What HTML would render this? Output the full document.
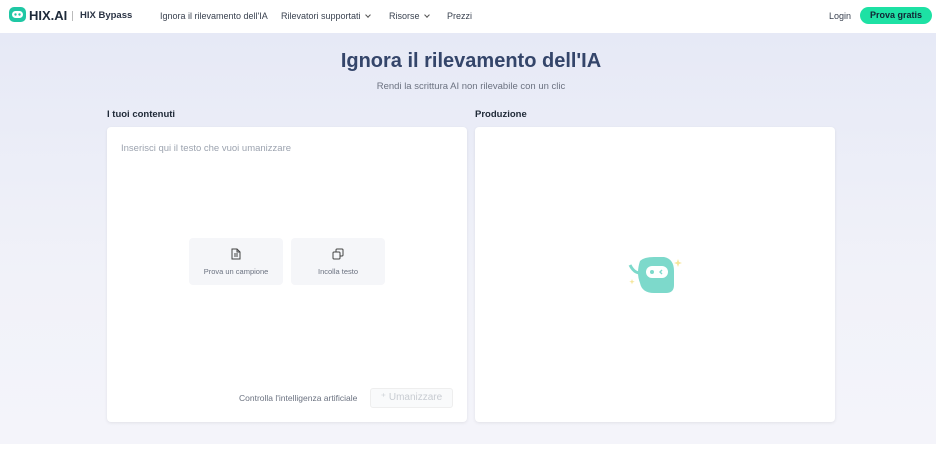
<!DOCTYPE html><html><head><style>
*{margin:0;padding:0;box-sizing:border-box}
body{width:942px;height:459px;background:#fff;font-family:"Liberation Sans",sans-serif;position:relative;overflow:hidden}
.hdr{position:absolute;left:0;top:0;width:942px;height:33px;background:#fff}
.main{position:absolute;left:0;top:33px;width:936px;height:411px;background:linear-gradient(#e6e9f6,#f1f2f9 60%,#f4f4fa)}
.t{position:absolute;white-space:nowrap}
.nav{font-size:9px;color:#3a4250;top:11px}
.panel{position:absolute;top:127px;width:360px;height:295px;background:#fff;border-radius:4px;box-shadow:0 1px 3px rgba(0,0,0,.08)}
.btn{position:absolute;top:238px;width:94px;height:47px;background:#f5f6f9;border-radius:4px;font-size:7.5px;color:#6b7280;text-align:center}
.chev{display:inline-block;width:4px;height:4px;border-right:1px solid #555;border-bottom:1px solid #555;transform:rotate(45deg);margin-left:5px;position:relative;top:-2px}
</style></head><body>
<div class="hdr">
<svg style="position:absolute;left:9px;top:7px" width="17" height="16" viewBox="0 0 17 16"><rect x="0" y="0" width="17" height="15" rx="5" fill="#1fc7a4"/><rect x="3" y="4" width="11" height="7" rx="3.5" fill="#fff"/><circle cx="6.5" cy="7.5" r="1.2" fill="#1fc7a4"/><circle cx="10.5" cy="7.5" r="1.2" fill="#1fc7a4"/></svg>
<div class="t" style="left:29px;top:8px;font-size:13px;font-weight:bold;color:#1e2a3a">HIX.AI</div>
<div style="position:absolute;left:72px;top:11px;width:1px;height:10px;background:#bbb"></div>
<div class="t" style="left:80px;top:10px;font-size:9.5px;font-weight:bold;color:#2b3445">HIX Bypass</div>
<div class="t nav" style="left:160px">Ignora il rilevamento dell'IA</div>
<div class="t nav" style="left:281px">Rilevatori supportati<span class="chev"></span></div>
<div class="t nav" style="left:389px">Risorse<span class="chev"></span></div>
<div class="t nav" style="left:447px">Prezzi</div>
<div class="t nav" style="left:829px">Login</div>
<div style="position:absolute;left:860px;top:7px;width:72px;height:17px;border-radius:9px;background:#1de1a4;font-size:9px;font-weight:bold;color:#123;text-align:center;line-height:17px">Prova gratis</div>
</div>
<div class="main"></div>
<div class="t" style="left:0;width:942px;text-align:center;top:50px;font-size:20px;font-weight:bold;color:#34456a">Ignora il rilevamento dell'IA</div>
<div class="t" style="left:0;width:942px;text-align:center;top:81px;font-size:9.5px;color:#6b7280">Rendi la scrittura AI non rilevabile con un clic</div>
<div class="t" style="left:107px;top:109px;font-size:9.5px;font-weight:bold;color:#1f2937">I tuoi contenuti</div>
<div class="t" style="left:475px;top:109px;font-size:9.5px;font-weight:bold;color:#1f2937">Produzione</div>
<div class="panel" style="left:107px"></div>
<div class="panel" style="left:475px"></div>
<div class="t" style="left:121px;top:143px;font-size:9.5px;color:#9ca3af">Inserisci qui il testo che vuoi umanizzare</div>
<div class="btn" style="left:189px"><svg style="margin-top:10px" width="10" height="12" viewBox="0 0 10 12"><path d="M1 1h5l3 3v7H1z M6 1v3h3 M3 6h4 M3 8h4" fill="none" stroke="#444" stroke-width="1"/></svg><div style="margin-top:5px">Prova un campione</div></div>
<div class="btn" style="left:291px"><svg style="margin-top:10px" width="12" height="12" viewBox="0 0 12 12"><rect x="4" y="1" width="7" height="7" rx="1" fill="none" stroke="#444"/><rect x="1" y="4" width="7" height="7" rx="1" fill="#f5f6f9" stroke="#444"/></svg><div style="margin-top:5px">Incolla testo</div></div>
<div class="t" style="left:239px;top:393px;font-size:8.5px;color:#6b7280">Controlla l'intelligenza artificiale</div>
<div style="position:absolute;left:370px;top:388px;width:83px;height:20px;border:1px solid #eee;border-radius:3px;background:#f9fafb;font-size:10px;color:#c8ccd2;text-align:center;line-height:18px">⁺ Umanizzare</div>
<svg style="position:absolute;left:626px;top:253px" width="60" height="42" viewBox="0 0 60 42"><path d="M14 8 Q18 4 28 4 L38 4 Q48 6 48 18 L48 32 Q48 40 40 40 L28 40 Q16 40 14 30 Q10 20 14 8z" fill="#7dd9cb"/><path d="M4 12 Q8 20 14 20" stroke="#7dd9cb" stroke-width="3" fill="none"/><rect x="20" y="13" width="22" height="12" rx="6" fill="#fff"/><circle cx="26" cy="19" r="2" fill="#7dd9cb"/><path d="M36 17l-2 2 2 2" stroke="#7dd9cb" stroke-width="1.4" fill="none"/><path d="M52 6l1 3 3 1-3 1-1 3-1-3-3-1 3-1z" fill="#f5e69a"/><path d="M6 26l.7 2 2 .7-2 .7-.7 2-.7-2-2-.7 2-.7z" fill="#f5e69a"/></svg>
</body></html>
